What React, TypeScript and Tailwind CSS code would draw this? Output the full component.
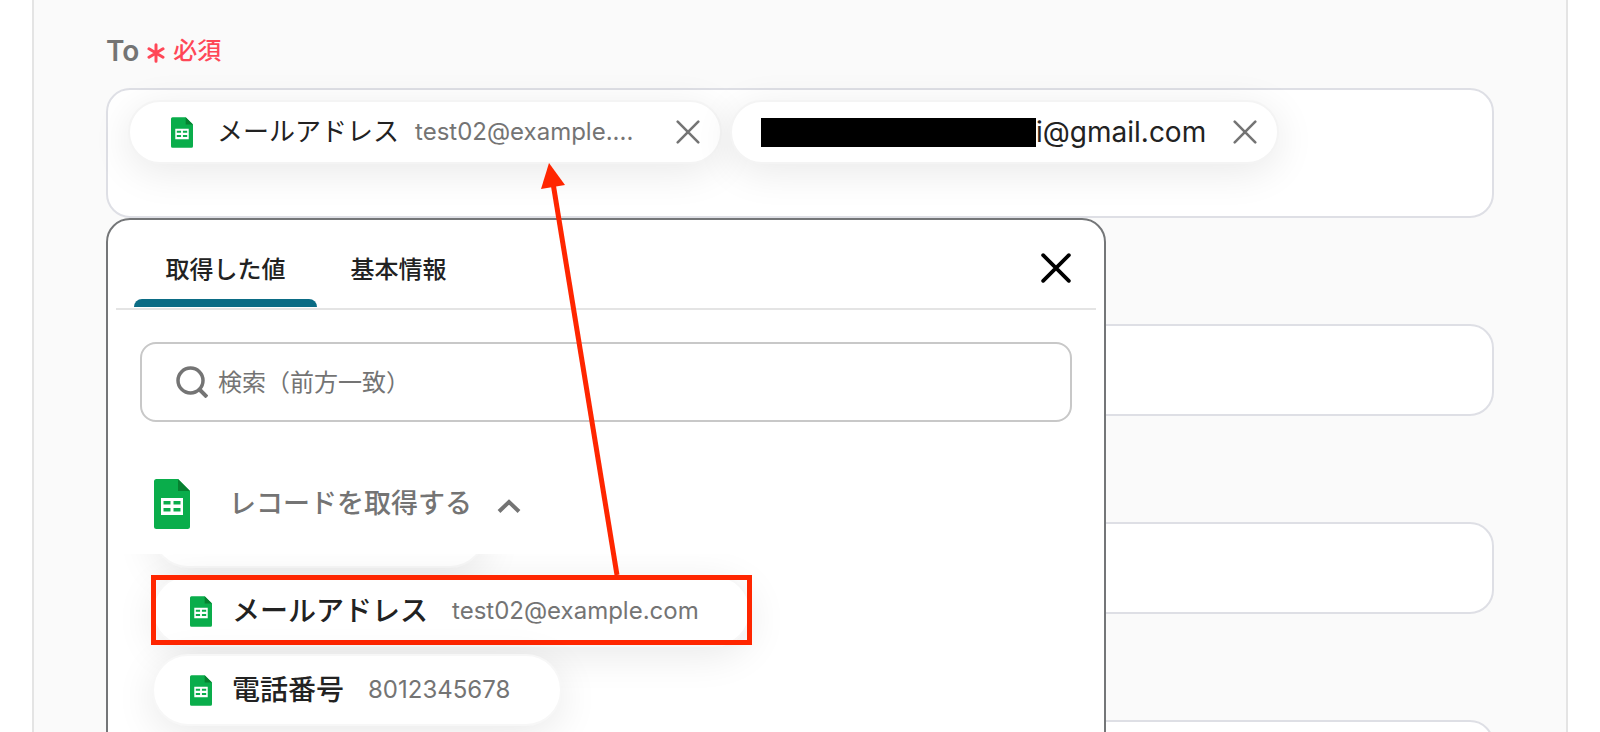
const latin = "font-['Inter','Noto_Sans_CJK_JP',sans-serif]";

function SheetIcon({ className }: { className: string }) {
  return (
    <svg viewBox="0 0 36 50" className={className} aria-hidden="true">
      <path d="M2.5 0H24L36 12V47.5A2.5 2.5 0 0 1 33.5 50H2.5A2.5 2.5 0 0 1 0 47.5V2.5A2.5 2.5 0 0 1 2.5 0Z" fill="#0aad4b" />
      <path d="M24 0L36 12H24Z" fill="#078030" />
      <path
        fillRule="evenodd"
        d="M7 19H29V36H7ZM9.500 22V25.500H16.500V22ZM19.500 22V25.500H26.500V22ZM9.500 29V32.500H16.500V29ZM19.500 29V32.500H26.500V29Z"
        fill="#fff"
      />
    </svg>
  );
}

function CrossIcon({ className, stroke }: { className: string; stroke: number }) {
  return (
    <svg viewBox="0 0 28 28" className={className} aria-hidden="true" fill="none" stroke="currentColor" strokeWidth={stroke} strokeLinecap="round">
      <path d="M2 2L26 26M26 2L2 26" />
    </svg>
  );
}

function RequiredMark() {
  return (
    <svg viewBox="0 0 18 20" className="mt-1 h-5 w-[18px]" aria-hidden="true" stroke="#ff4757" strokeWidth="3" strokeLinecap="round">
      <path d="M9 1.800V18.200M2 5.800L16 14.200M16 5.800L2 14.200" />
    </svg>
  );
}

function RecipientField() {
  return (
    <div className="flex h-[130px] items-start gap-2 rounded-3xl border-2 border-[#dedfe5] bg-white px-5 pt-2.5">
      <div className="flex h-16 w-[594px] items-center rounded-full border-2 border-[#f4f4f4] bg-white pr-5 pl-[41px] shadow-[0_8px_40px_rgba(0,0,0,0.09)]">
        <SheetIcon className="h-[31px] w-[22px]" />
        <span className="ml-6 text-[26px] leading-8 whitespace-nowrap text-[#222]">メールアドレス</span>
        <span className="ml-4 flex-1 text-[24px] leading-8 whitespace-nowrap text-[#747474]">test02@example....</span>
        <button type="button" aria-label="メールアドレスを削除" className="text-[#747474]">
          <CrossIcon className="size-6" stroke={3} />
        </button>
      </div>
      <div className="flex h-16 w-[549px] items-center rounded-full border-2 border-[#f4f4f4] bg-white pr-5 pl-[29px] shadow-[0_8px_40px_rgba(0,0,0,0.09)]">
        <span className="h-[29px] w-[275px] bg-black" />
        <span className="flex-1 text-[28px] leading-8 whitespace-nowrap text-[#222]">i@gmail.com</span>
        <button type="button" aria-label="宛先を削除" className="text-[#747474]">
          <CrossIcon className="size-6" stroke={3} />
        </button>
      </div>
      <input id="to" type="text" className="h-16 min-w-0 flex-1 bg-transparent text-[28px] outline-none" />
    </div>
  );
}

function ValueChip({ name, value, highlighted = false }: { name: string; value: string; highlighted?: boolean }) {
  return (
    <button
      type="button"
      className="relative flex h-[72px] shrink-0 items-center rounded-full border-2 border-[#f7f7f7] bg-white pr-[50px] pl-9 shadow-[0_8px_40px_rgba(0,0,0,0.09)]"
    >
      <SheetIcon className="h-[31px] w-[22px]" />
      <span className="ml-5 text-[28px] leading-10 font-medium whitespace-nowrap text-[#222]">{name}</span>
      <span className="ml-6 text-[24px] leading-8 whitespace-nowrap text-[#747474]">{value}</span>
      {highlighted && <span className="absolute -inset-x-[3px] -top-0.5 bottom-0 border-[5px] border-[#ff2600]" />}
    </button>
  );
}

function ValuePicker() {
  return (
    <div className="absolute top-full left-0 z-10 h-[640px] w-[1000px] overflow-hidden rounded-t-3xl border-2 border-[#747678] bg-white">
      <div className="mx-2 flex h-[90px] items-end border-b-2 border-[#e4e4e4] pl-[18px]">
        <div role="tablist" className="flex self-stretch text-[24px] leading-9 font-medium text-[#222]">
          <button type="button" role="tab" aria-selected="true" className="flex w-[183px] flex-col items-center justify-end">
            <span className="mb-[11px]">取得した値</span>
            <span className="mb-px h-2 w-full rounded-t-lg bg-[#0b6c85]" />
          </button>
          <button type="button" role="tab" aria-selected="false" className="flex w-[163px] flex-col items-center justify-end">
            <span className="mb-5">基本情報</span>
          </button>
        </div>
        <button type="button" aria-label="閉じる" className="mr-[25px] mb-[25px] ml-auto text-black">
          <CrossIcon className="size-[30px]" stroke={3.500} />
        </button>
      </div>

      <label className="mx-8 mt-8 flex h-20 items-center rounded-2xl border-2 border-[#c8c8c8] px-[34px]">
        <svg viewBox="0 0 32 32" className="size-8 shrink-0" aria-hidden="true" fill="none" stroke="#747474" strokeWidth="3.500">
          <circle cx="14.500" cy="14.500" r="12.500" />
          <path d="M23.500 23.500L31 31" strokeWidth="4" />
        </svg>
        <input
          type="search"
          aria-label="検索"
          placeholder="検索（前方一致）"
          className="ml-2.5 h-10 min-w-0 flex-1 bg-transparent text-[24px] text-[#222] outline-none placeholder:text-[#747474]"
        />
      </label>

      <button type="button" aria-expanded="true" className="mt-[57px] ml-[46px] flex h-[50px] items-center">
        <SheetIcon className="h-[50px] w-9" />
        <span className="ml-[39px] text-[27px] leading-10 font-medium text-[#747474]">レコードを取得する</span>
        <svg viewBox="0 0 24 16" className="mt-1 ml-[25px] h-4 w-6" aria-hidden="true" fill="none" stroke="#747474" strokeWidth="4">
          <path d="M2 13.500L12 4L22 13.500" />
        </svg>
      </button>

      <div className="mt-[25px] h-[300px] overflow-hidden pl-11">
        <div className="-mt-[58px] flex flex-col items-start gap-[7px]">
          <div className="h-[72px] w-[334px] shrink-0 rounded-full border-2 border-[#f7f7f7] bg-white shadow-[0_8px_40px_rgba(0,0,0,0.09)]" />
          <ValueChip name="メールアドレス" value="test02@example.com" highlighted />
          <ValueChip name="電話番号" value="8012345678" />
        </div>
      </div>
    </div>
  );
}

function PointerArrow() {
  return (
    <svg viewBox="0 0 90 416" className="pointer-events-none absolute top-[75px] left-[430px] z-20 h-[416px] w-[90px]" aria-hidden="true">
      <path d="M17 20L81 412" stroke="#ff2600" strokeWidth="5" />
      <path d="M13 0L5 26L29 22Z" fill="#ff2600" />
    </svg>
  );
}

export default function App() {
  return (
    <div className={`h-screen overflow-hidden bg-white px-8 ${latin}`}>
      <main lang="ja" className="flex h-full flex-col gap-[106px] border-x-2 border-[#e4e4e4] bg-[#fafafa] px-[72px] pt-8">
        <section>
          <label htmlFor="to" className="flex h-[38px] items-center text-[#747474]">
            <span className="text-[28px] leading-9 font-semibold">To</span>
            <span className="ml-2 flex items-center gap-2 text-[24px] leading-9 font-medium text-[#ff4757]">
              <RequiredMark />
              必須
            </span>
          </label>
          <div className="relative mt-[18px]">
            <RecipientField />
            <ValuePicker />
            <PointerArrow />
          </div>
        </section>
        <input type="text" aria-label="Cc" className="h-[92px] shrink-0 rounded-3xl border-2 border-[#dedfe5] bg-white px-6" />
        <input type="text" aria-label="Bcc" className="h-[92px] shrink-0 rounded-3xl border-2 border-[#dedfe5] bg-white px-6" />
        <input type="text" aria-label="件名" className="h-[92px] shrink-0 rounded-3xl border-2 border-[#dedfe5] bg-white px-6" />
      </main>
    </div>
  );
}
